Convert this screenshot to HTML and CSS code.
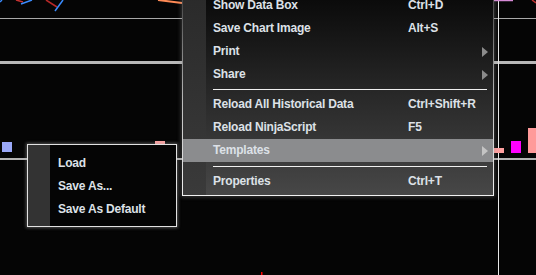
FILE: index.html
```html
<!DOCTYPE html>
<html>
<head>
<meta charset="utf-8">
<link rel="stylesheet" href="styles.css">
</head>
<body>
<div class="chart">
  <div class="hline hline-a"></div>
  <div class="hline hline-b"></div>
  <div class="hline hline-c"></div>
  <div class="vline"></div>
  <svg class="plot" width="536" height="275" viewBox="0 0 536 275">
    <line x1="0" y1="2" x2="2" y2="0" stroke="#3a8cff" stroke-width="1.5"/>
    <line x1="16" y1="0" x2="23" y2="2" stroke="#c83232" stroke-width="1.5"/>
    <line x1="21" y1="4" x2="32" y2="0" stroke="#3a8cff" stroke-width="1.5"/>
    <line x1="46" y1="0" x2="57" y2="7" stroke="#b82828" stroke-width="1.5"/>
    <line x1="55" y1="11" x2="63" y2="0" stroke="#3a8cff" stroke-width="1.5"/>
    <line x1="158" y1="0" x2="182" y2="3" stroke="#ff8a55" stroke-width="2"/>
    <line x1="494" y1="0.5" x2="513" y2="0.5" stroke="#d68ad6" stroke-width="1.5"/>
    <line x1="532" y1="0" x2="536" y2="3" stroke="#c03030" stroke-width="1.5"/>
    <rect x="2" y="142" width="10" height="10" fill="#9aa8f8"/>
    <rect x="155" y="141" width="10" height="4" fill="#ffa0a0"/>
    <rect x="494" y="148" width="10" height="5" fill="#ffa0a0"/>
    <rect x="511" y="141" width="10" height="12" fill="#ff00ff"/>
    <rect x="528" y="128" width="8" height="25" fill="#ff9a9a"/>
    <rect x="261" y="272" width="1.5" height="3" fill="#ff0000"/>
  </svg>

  <div class="menu main-menu">
    <div class="item"><span class="label">Show Data Box</span><span class="key">Ctrl+D</span><span class="arrow-slot"></span></div>
    <div class="item"><span class="label">Save Chart Image</span><span class="key">Alt+S</span><span class="arrow-slot"></span></div>
    <div class="item"><span class="label">Print</span><span class="key"></span><span class="arrow-slot"><span class="arrow"></span></span></div>
    <div class="item"><span class="label">Share</span><span class="key"></span><span class="arrow-slot"><span class="arrow"></span></span></div>
    <div class="sep sep-short"></div>
    <div class="item"><span class="label">Reload All Historical Data</span><span class="key">Ctrl+Shift+R</span><span class="arrow-slot"></span></div>
    <div class="item"><span class="label">Reload NinjaScript</span><span class="key">F5</span><span class="arrow-slot"></span></div>
    <div class="item active"><span class="label">Templates</span><span class="key"></span><span class="arrow-slot"><span class="arrow"></span></span></div>
    <div class="sep"></div>
    <div class="item"><span class="label">Properties</span><span class="key">Ctrl+T</span><span class="arrow-slot"></span></div>
  </div>

  <div class="menu sub-menu">
    <div class="item"><span class="label">Load</span></div>
    <div class="item"><span class="label">Save As...</span></div>
    <div class="item"><span class="label">Save As Default</span></div>
  </div>
</div>
</body>
</html>
```

FILE: styles.css
```css
html, body {
  margin: 0;
  padding: 0;
  background: #050505;
}

.chart {
  position: relative;
  width: 536px;
  height: 275px;
  overflow: hidden;
  background: #050505;
  font-family: "Liberation Sans", Arial, sans-serif;
  font-weight: bold;
  font-size: 12px;
  letter-spacing: -0.2px;
  color: #dde1e7;
}

.hline {
  position: absolute;
  left: 0;
  right: 0;
}
.hline-a { top: 18px; height: 1px; background: #a8a8a8; }
.hline-b { top: 61px; height: 3px; background: #b8b8b8; }
.hline-c { top: 158px; height: 2px; background: #b4b4b4; }

.vline {
  position: absolute;
  left: 498px;
  top: 0;
  bottom: 0;
  width: 1px;
  background: #e8e8e8;
}

.plot {
  position: absolute;
  left: 0;
  top: 0;
}

.menu {
  position: absolute;
  box-sizing: border-box;
}

.main-menu {
  left: 182px;
  top: -10px;
  width: 312px;
  padding: 3px 0 2px 0;
  border: 1px solid;
  border-image: linear-gradient(#3a3a3a, #bdbdbd 55%, #f0f0f0) 1;
  background:
    linear-gradient(#2a2a2a, #3a3a3a) left top / 23px 100% no-repeat,
    linear-gradient(#080808, #474747);
  box-shadow: 0 0 4px 1px rgba(150, 150, 150, 0.35);
}

.sub-menu {
  left: 27px;
  top: 144px;
  width: 150px;
  padding: 7px 0 5px 0;
  border: 1px solid #e2e2e2;
  background:
    linear-gradient(#333333, #333333) left top / 22px 100% no-repeat,
    #050505;
  box-shadow: 0 0 3px 1px rgba(170, 170, 170, 0.45);
}

.item {
  display: flex;
  align-items: center;
  height: 23px;
  line-height: 23px;
  padding-left: 30px;
  white-space: nowrap;
}

.main-menu .label {
  width: 195px;
  flex: none;
}

.key {
  flex: 1;
}

.arrow-slot {
  width: 11px;
  flex: none;
  display: flex;
  align-items: center;
}

.arrow {
  display: block;
  width: 0;
  height: 0;
  border-left: 6px solid #8c8c8c;
  border-top: 5px solid transparent;
  border-bottom: 5px solid transparent;
}

.item.active {
  background: #8b8c8e;
}
.item.active .arrow {
  border-left-color: #c4c4c4;
}

.sep {
  height: 8px;
  display: flex;
  align-items: center;
  padding-left: 30px;
  padding-right: 6px;
}
.sep-short {
  height: 7px;
}
.sep::before {
  content: "";
  display: block;
  flex: 1;
  height: 1px;
  background: #f0f0f0;
}
```
